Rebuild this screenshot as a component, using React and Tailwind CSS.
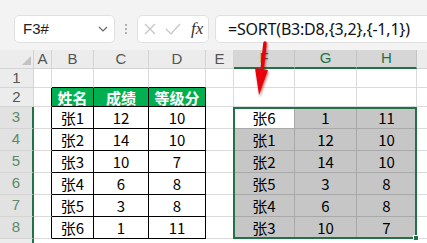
import React from 'react';

const cols = ['A', 'B', 'C', 'D', 'E', 'F', 'G', 'H'];

const source = [
  ['张1', '12', '10'],
  ['张2', '14', '10'],
  ['张3', '10', '7'],
  ['张4', '6', '8'],
  ['张5', '3', '8'],
  ['张6', '1', '11'],
];

const sorted = [
  ['张6', '1', '11'],
  ['张1', '12', '10'],
  ['张2', '14', '10'],
  ['张5', '3', '8'],
  ['张4', '6', '8'],
  ['张3', '10', '7'],
];

const gridCls =
  'grid grid-cols-[34px_18px_42px_55px_57px_28px_61px_62px_60px_1fr] grid-rows-[19px_19px_19px_22px_22px_22px_22px_22px_22px_4px]';

const cellValue = (row, ci) => {
  // ci: 0 = A ... 7 = H
  if (row === 2 && ci >= 1 && ci <= 3) return ['姓名', '成绩', '等级分'][ci - 1];
  if (row >= 3 && ci >= 1 && ci <= 3) return source[row - 3][ci - 1];
  if (row >= 3 && ci >= 5 && ci <= 7) return sorted[row - 3][ci - 5];
  return '';
};

const cellClass = (row, ci) => {
  const inSource = row >= 2 && ci >= 1 && ci <= 3;
  const inResult = row >= 3 && ci >= 5 && ci <= 7;
  let cls = 'flex items-center justify-center border-r border-b text-[15px] leading-none ';
  if (inSource) {
    cls += 'border-black ';
    cls += row === 2 ? 'bg-[#00b050] text-white font-bold ' : 'bg-white text-black ';
  } else if (inResult) {
    cls += 'border-[#a9a9a9] text-black ';
    cls += row === 3 && ci === 5 ? 'bg-white ' : 'bg-[#c6c6c6] ';
  } else {
    cls += 'bg-white ';
    // cells touching the table's left/top edge carry the black line
    if (ci === 0 && row >= 2) cls += 'border-b-[#dadada] border-r-black ';
    else if (row === 1 && ci >= 1 && ci <= 3) cls += 'border-r-[#dadada] border-b-black ';
    else cls += 'border-[#dadada] ';
  }
  return cls;
};

const App = () => {
  const rows = [1, 2, 3, 4, 5, 6, 7, 8];

  return (
    <div className="relative w-[427px] h-[243px] overflow-hidden bg-white font-['Noto_Sans_CJK_SC','Microsoft_YaHei',sans-serif]">
      {/* Formula bar */}
      <div className="h-[50px] bg-[#f3f3f3] flex items-start pt-[15px] pl-[14px]">
        <div className="shrink-0 w-[101px] h-[28px] bg-white border border-[#e0e0e0] rounded-[5px] flex items-center justify-between pl-[8px] pr-[6px]">
          <span className="text-[15px] text-[#222] font-['Liberation_Sans',sans-serif]">F3#</span>
          <svg width="10" height="6" viewBox="0 0 10 6">
            <path d="M1 1 L5 5 L9 1" fill="none" stroke="#666" strokeWidth="1.2" />
          </svg>
        </div>
        <div className="shrink-0 w-[22px] h-[28px] flex flex-col items-center justify-center gap-[2px]">
          <span className="w-[2px] h-[2px] bg-[#999] rounded-full"></span>
          <span className="w-[2px] h-[2px] bg-[#999] rounded-full"></span>
          <span className="w-[2px] h-[2px] bg-[#999] rounded-full"></span>
        </div>
        <div className="shrink-0 w-[72px] h-[28px] bg-white border border-[#e0e0e0] rounded-[5px] flex items-center pl-[5px]">
          <svg width="14" height="14" viewBox="0 0 14 14">
            <path d="M2 2 L12 12 M12 2 L2 12" stroke="#c4c4c4" strokeWidth="1.2" />
          </svg>
          <svg width="16" height="14" viewBox="0 0 16 14" className="ml-[8px]">
            <path d="M1 7 L6 12 L15 2" fill="none" stroke="#c4c4c4" strokeWidth="1.2" />
          </svg>
          <span className="ml-[10px] text-[17px] italic text-[#333] font-['Liberation_Serif',serif]">fx</span>
        </div>
        <div className="shrink-0 ml-[6px] w-[240px] h-[28px] bg-white border border-[#e0e0e0] rounded-l-[5px] flex items-center pl-[12px]">
          <span className="text-[16px] text-[#111] tracking-[-0.2px] font-['Noto_Sans',sans-serif]">=SORT(B3:D8,{'{'}3,2{'}'},{'{'}-1,1{'}'})</span>
        </div>
      </div>

      {/* Sheet: cells and the selection layer share one grid area */}
      <div className="grid">
        <div className={gridCls + ' [grid-area:1/1]'}>
          {/* column header row */}
          <div className="bg-[#ececec] border-r border-b border-[#d4d4d4] flex items-end justify-end pr-[2px] pb-[3px]">
            <svg width="9" height="9" viewBox="0 0 9 9">
              <path d="M9 0 L9 9 L0 9 Z" fill="#c3c3c3" />
            </svg>
          </div>
          {cols.map((c, i) =>
            i >= 5 ? (
              <div key={c} className="bg-[#d6d6d6] border-r border-[#c4c4c4] border-b-2 border-b-[#217346] flex items-center justify-center text-[15px] text-[#217346] font-['Liberation_Sans',sans-serif]">
                {c}
              </div>
            ) : (
              <div key={c} className="bg-[#ececec] border-r border-b border-[#d4d4d4] flex items-center justify-center text-[15px] text-[#555] font-['Liberation_Sans',sans-serif]">
                {c}
              </div>
            )
          )}
          <div className="bg-[#ececec] border-b border-[#d4d4d4]"></div>

          {rows.map((row) => (
            <React.Fragment key={row}>
              {row >= 3 ? (
                <div className="bg-[#e2e2e2] border-b border-[#d4d4d4] border-r-2 border-r-[#217346] flex items-center justify-center text-[15px] text-[#5b8a6b] font-['Liberation_Sans',sans-serif]">
                  {row}
                </div>
              ) : (
                <div className="bg-[#ececec] border-r border-b border-[#d4d4d4] flex items-center justify-center text-[15px] text-[#555] font-['Liberation_Sans',sans-serif]">
                  {row}
                </div>
              )}
              {cols.map((c, ci) => (
                <div key={c} className={cellClass(row, ci)}>
                  {cellValue(row, ci)}
                </div>
              ))}
              <div className="bg-white border-b border-[#dadada]"></div>
            </React.Fragment>
          ))}

          {/* bottom sliver */}
          <div className="bg-[#ececec] border-r-2 border-r-[#217346]"></div>
          <div className="col-span-9 bg-white"></div>
        </div>

        {/* selection outline over F3:H8 */}
        <div className={gridCls + ' [grid-area:1/1] pointer-events-none'}>
          <div className="col-start-7 col-end-10 row-start-4 row-end-10 relative -ml-px border-2 border-[#217346]">
            <span className="absolute -right-[4px] -bottom-[4px] w-[6px] h-[6px] bg-[#217346] border border-white"></span>
          </div>
        </div>
      </div>

      {/* red arrow */}
      <svg className="absolute left-[245px] top-[38px]" width="30" height="64" viewBox="0 0 30 64">
        <defs>
          <filter id="sh" x="-50%" y="-50%" width="200%" height="200%">
            <feDropShadow dx="1" dy="2" stdDeviation="1.2" floodColor="#7a0000" floodOpacity="0.5" />
          </filter>
        </defs>
        <g filter="url(#sh)">
          <path d="M20 5 L17 33" stroke="#e8000b" strokeWidth="3.5" strokeLinecap="round" />
          <path d="M10 30 L23 32 L14 57 Z" fill="#e8000b" />
        </g>
      </svg>
    </div>
  );
};

export default App;
